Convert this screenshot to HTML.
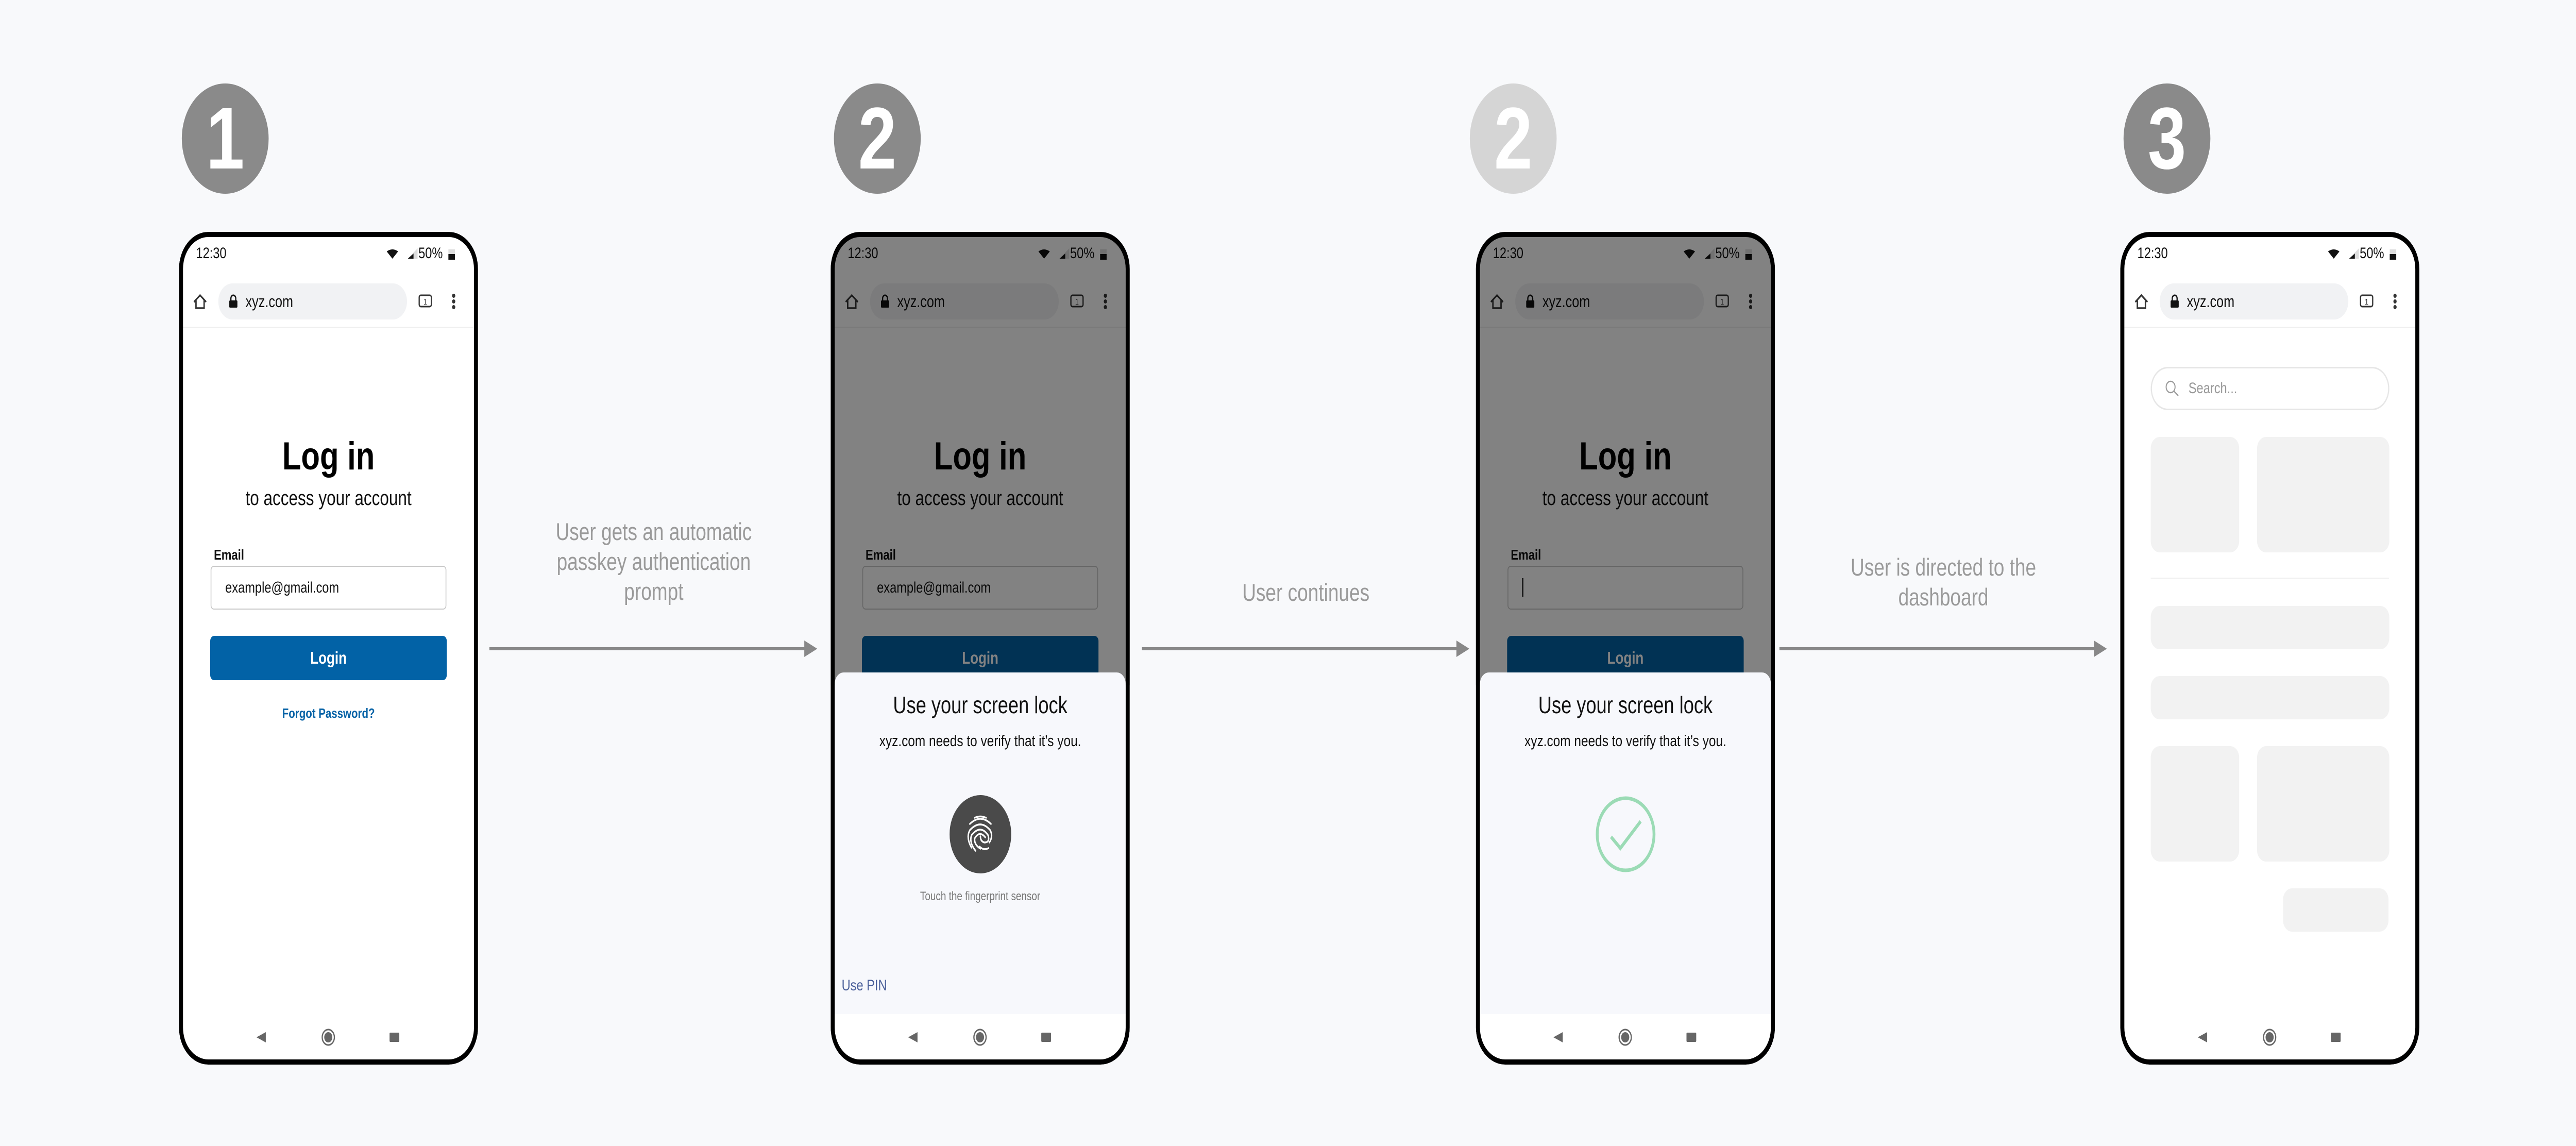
<!DOCTYPE html>
<html style="overflow:hidden"><head><meta charset="utf-8"><style>
*{margin:0;padding:0;box-sizing:border-box}
html{overflow:hidden;background:#f8f9fb}
body{width:6348px;height:2224px;background:#f8f9fb;position:relative;overflow:hidden;font-family:"Liberation Sans",sans-serif;transform-origin:0 0}
.a{position:absolute}
.badge{position:absolute;top:162px;width:214px;height:214px;border-radius:50%;background:#8a8a8a;color:#fff;font-weight:bold;font-size:170px;line-height:214px;text-align:center}
.phone{position:absolute;top:450px;width:737px;height:1616px;border-radius:72px;overflow:hidden;background:#fff}
.frame{position:absolute;inset:0;border:10px solid #000;border-radius:72px;z-index:20}
.c{position:absolute;left:0;width:737px;text-align:center}
.time{left:42px;top:24px;font-size:30px;line-height:36px;color:#111}
.pct{left:590px;top:24px;font-size:30px;line-height:36px;color:#111}
.url{left:97px;top:100px;width:465px;height:70px;border-radius:35px;background:#f1f2f4}
.urlt{left:164px;top:116px;font-size:32px;line-height:38px;color:#111}
.sep{left:10px;top:184px;width:717px;height:3px;background:#efefef}
.login{top:396px;font-size:76px;font-weight:bold;line-height:80px;color:#000}
.sub{top:494px;font-size:40px;line-height:46px;color:#111}
.elab{left:86px;top:611px;font-size:28px;font-weight:bold;line-height:32px;color:#111}
.inp{left:78px;top:648px;width:581px;height:85px;border:2px solid #c9c9c9;border-radius:8px;background:#fff}
.inpt{left:114px;top:673px;font-size:30px;line-height:36px;color:#111}
.btn{left:77px;top:784px;width:583px;height:86px;border-radius:10px;background:#0262a6;color:#fff;font-weight:bold;font-size:33px;line-height:86px;text-align:center}
.fp{top:917px;font-size:26px;font-weight:bold;color:#0562a6;line-height:34px}
.nav{top:1543px}
.dim{left:0;top:0;width:737px;height:880px;background:rgba(0,0,0,0.49);z-index:5}
.sheet{left:10px;top:855px;width:717px;height:663px;background:#f7f8fc;border-radius:22px 22px 0 0;z-index:6}
.cap{position:absolute;color:#9a9a9a;font-size:47px;line-height:58px;text-align:center;width:700px}
.card{position:absolute;background:#f2f2f2;border-radius:22px}
</style></head><body>

<div class="badge" style="left:448px">1</div>
<div class="badge" style="left:2055px">2</div>
<div class="badge" style="left:3622px;background:#d5d5d5">2</div>
<div class="badge" style="left:5233px">3</div>

<svg class="a" style="left:0;top:0" width="6348" height="2224">
<g stroke="#888" stroke-width="6" fill="#888">
<line x1="1206" y1="1259" x2="1985" y2="1259"/><polygon points="2014,1259 1982,1243 1982,1275" stroke="none"/>
<line x1="2814" y1="1259" x2="3592" y2="1259"/><polygon points="3621,1259 3589,1243 3589,1275" stroke="none"/>
<line x1="4385" y1="1259" x2="5163" y2="1259"/><polygon points="5192,1259 5160,1243 5160,1275" stroke="none"/>
</g></svg>
<div class="cap" style="left:1261px;top:1003px">User gets an automatic<br>passkey authentication<br>prompt</div>
<div class="cap" style="left:2868px;top:1121px">User continues</div>
<div class="cap" style="left:4439px;top:1072px">User is directed to the<br>dashboard</div>

<!-- PHONE 1 -->
<div class="phone" style="left:441px">
<div class="a time">12:30</div>
<svg class="a" style="left:508px;top:30px" width="180" height="30"><path d="M4 8 Q18 0 32 8 L18 22Z" fill="#111"/><path d="M56 22 L80 22 L80 2Z" fill="#ddd"/><path d="M56 22 L70 22 L70 12Z" fill="#111"/><rect x="156" y="4" width="16" height="20" fill="#ddd"/><rect x="156" y="13" width="16" height="11" fill="#111"/></svg>
<div class="a pct">50%</div>
<div class="a url"></div>
<svg class="a" style="left:34px;top:118px" width="40" height="36"><path d="M3 18 L18 5 L33 18 M8 15 V30 H28 V15" fill="none" stroke="#333" stroke-width="3.5"/></svg>
<svg class="a" style="left:122px;top:121px" width="24" height="28"><path d="M6 12 V8 a6 6 0 0 1 12 0 V12" fill="none" stroke="#111" stroke-width="3"/><rect x="2" y="12" width="20" height="14" rx="2" fill="#111"/></svg>
<div class="a urlt">xyz.com</div>
<svg class="a" style="left:590px;top:121px" width="36" height="28"><rect x="2" y="2" width="30" height="22" rx="4" fill="none" stroke="#333" stroke-width="3"/><text x="17" y="20" font-size="16" text-anchor="middle" font-family="Liberation Sans" fill="#333">1</text></svg>
<svg class="a" style="left:670px;top:118px" width="14" height="36"><circle cx="7" cy="6" r="4" fill="#333"/><circle cx="7" cy="17" r="4" fill="#333"/><circle cx="7" cy="28" r="4" fill="#333"/></svg>
<div class="a sep"></div>
<div class="c login">Log in</div>
<div class="c sub">to access your account</div>
<div class="a elab">Email</div>
<div class="a inp"></div>
<div class="a inpt">example@gmail.com</div>
<div class="a btn">Login</div>
<div class="c fp">Forgot Password?</div>
<svg class="a nav" style="left:0" width="737" height="40"><path d="M191 20 L214 10 V30Z" fill="#666"/><circle cx="368" cy="20" r="15" fill="none" stroke="#666" stroke-width="3"/><circle cx="368" cy="20" r="10" fill="#666"/><rect x="519" y="11" width="24" height="18" rx="2" fill="#666"/></svg>
<div class="frame"></div>
</div>

<!-- PHONE 2 -->
<div class="phone" style="left:2047px">
<div class="a time">12:30</div>
<svg class="a" style="left:508px;top:30px" width="180" height="30"><path d="M4 8 Q18 0 32 8 L18 22Z" fill="#111"/><path d="M56 22 L80 22 L80 2Z" fill="#ddd"/><path d="M56 22 L70 22 L70 12Z" fill="#111"/><rect x="156" y="4" width="16" height="20" fill="#ddd"/><rect x="156" y="13" width="16" height="11" fill="#111"/></svg>
<div class="a pct">50%</div>
<div class="a url"></div>
<svg class="a" style="left:34px;top:118px" width="40" height="36"><path d="M3 18 L18 5 L33 18 M8 15 V30 H28 V15" fill="none" stroke="#333" stroke-width="3.5"/></svg>
<svg class="a" style="left:122px;top:121px" width="24" height="28"><path d="M6 12 V8 a6 6 0 0 1 12 0 V12" fill="none" stroke="#111" stroke-width="3"/><rect x="2" y="12" width="20" height="14" rx="2" fill="#111"/></svg>
<div class="a urlt">xyz.com</div>
<svg class="a" style="left:590px;top:121px" width="36" height="28"><rect x="2" y="2" width="30" height="22" rx="4" fill="none" stroke="#333" stroke-width="3"/><text x="17" y="20" font-size="16" text-anchor="middle" font-family="Liberation Sans" fill="#333">1</text></svg>
<svg class="a" style="left:670px;top:118px" width="14" height="36"><circle cx="7" cy="6" r="4" fill="#333"/><circle cx="7" cy="17" r="4" fill="#333"/><circle cx="7" cy="28" r="4" fill="#333"/></svg>
<div class="a sep"></div>
<div class="c login">Log in</div>
<div class="c sub">to access your account</div>
<div class="a elab">Email</div>
<div class="a inp"></div>
<div class="a inpt">example@gmail.com</div>
<div class="a btn">Login</div>
<div class="a dim"></div>
<div class="a sheet"></div>
<div class="c" style="top:891px;font-size:46px;line-height:54px;color:#111;z-index:7">Use your screen lock</div>
<div class="c" style="top:969px;font-size:31px;line-height:38px;color:#111;z-index:7">xyz.com needs to verify that it’s you.</div>
<svg class="a" style="left:293px;top:1093px;z-index:7" width="152" height="152"><circle cx="76" cy="76" r="76" fill="#4a4a4a"/>
<g fill="none" stroke="#fff" stroke-width="3.5" stroke-linecap="round">
<path d="M62 44 Q76 39 90 44"/><path d="M50 56 Q76 36 102 56"/><path d="M54 102 Q40 82 50 68 Q76 46 100 68 Q108 80 98 92"/><path d="M64 108 Q48 92 54 78 Q76 56 95 78 Q100 92 86 92 Q76 90 76 80"/><path d="M76 104 Q60 96 62 84 Q74 68 88 82"/><path d="M96 103 Q84 108 74 100"/></g></svg>
<div class="c" style="top:1276px;font-size:24px;line-height:28px;color:#777;z-index:7">Touch the fingerprint sensor</div>
<div class="a" style="left:27px;top:1446px;font-size:30px;line-height:34px;color:#4a5f9a;z-index:7">Use PIN</div>
<svg class="a nav" style="left:0" width="737" height="40"><path d="M191 20 L214 10 V30Z" fill="#666"/><circle cx="368" cy="20" r="15" fill="none" stroke="#666" stroke-width="3"/><circle cx="368" cy="20" r="10" fill="#666"/><rect x="519" y="11" width="24" height="18" rx="2" fill="#666"/></svg>
<div class="frame"></div>
</div>

<!-- PHONE 3 -->
<div class="phone" style="left:3637px">
<div class="a time">12:30</div>
<svg class="a" style="left:508px;top:30px" width="180" height="30"><path d="M4 8 Q18 0 32 8 L18 22Z" fill="#111"/><path d="M56 22 L80 22 L80 2Z" fill="#ddd"/><path d="M56 22 L70 22 L70 12Z" fill="#111"/><rect x="156" y="4" width="16" height="20" fill="#ddd"/><rect x="156" y="13" width="16" height="11" fill="#111"/></svg>
<div class="a pct">50%</div>
<div class="a url"></div>
<svg class="a" style="left:34px;top:118px" width="40" height="36"><path d="M3 18 L18 5 L33 18 M8 15 V30 H28 V15" fill="none" stroke="#333" stroke-width="3.5"/></svg>
<svg class="a" style="left:122px;top:121px" width="24" height="28"><path d="M6 12 V8 a6 6 0 0 1 12 0 V12" fill="none" stroke="#111" stroke-width="3"/><rect x="2" y="12" width="20" height="14" rx="2" fill="#111"/></svg>
<div class="a urlt">xyz.com</div>
<svg class="a" style="left:590px;top:121px" width="36" height="28"><rect x="2" y="2" width="30" height="22" rx="4" fill="none" stroke="#333" stroke-width="3"/><text x="17" y="20" font-size="16" text-anchor="middle" font-family="Liberation Sans" fill="#333">1</text></svg>
<svg class="a" style="left:670px;top:118px" width="14" height="36"><circle cx="7" cy="6" r="4" fill="#333"/><circle cx="7" cy="17" r="4" fill="#333"/><circle cx="7" cy="28" r="4" fill="#333"/></svg>
<div class="a sep"></div>
<div class="c login">Log in</div>
<div class="c sub">to access your account</div>
<div class="a elab">Email</div>
<div class="a inp"></div>
<div class="a" style="left:114px;top:672px;width:3px;height:36px;background:#111"></div>
<div class="a btn">Login</div>
<div class="a dim"></div>
<div class="a sheet"></div>
<div class="c" style="top:891px;font-size:46px;line-height:54px;color:#111;z-index:7">Use your screen lock</div>
<div class="c" style="top:969px;font-size:31px;line-height:38px;color:#111;z-index:7">xyz.com needs to verify that it’s you.</div>
<svg class="a" style="left:289px;top:1089px;z-index:7" width="160" height="160"><circle cx="80" cy="80" r="70" fill="none" stroke="#9bdbb5" stroke-width="7"/><path d="M44 85 L67 107 L117 55" fill="none" stroke="#9bdbb5" stroke-width="7"/></svg>
<svg class="a nav" style="left:0" width="737" height="40"><path d="M191 20 L214 10 V30Z" fill="#666"/><circle cx="368" cy="20" r="15" fill="none" stroke="#666" stroke-width="3"/><circle cx="368" cy="20" r="10" fill="#666"/><rect x="519" y="11" width="24" height="18" rx="2" fill="#666"/></svg>
<div class="frame"></div>
</div>

<!-- PHONE 4 -->
<div class="phone" style="left:5225px">
<div class="a time">12:30</div>
<svg class="a" style="left:508px;top:30px" width="180" height="30"><path d="M4 8 Q18 0 32 8 L18 22Z" fill="#111"/><path d="M56 22 L80 22 L80 2Z" fill="#ddd"/><path d="M56 22 L70 22 L70 12Z" fill="#111"/><rect x="156" y="4" width="16" height="20" fill="#ddd"/><rect x="156" y="13" width="16" height="11" fill="#111"/></svg>
<div class="a pct">50%</div>
<div class="a url"></div>
<svg class="a" style="left:34px;top:118px" width="40" height="36"><path d="M3 18 L18 5 L33 18 M8 15 V30 H28 V15" fill="none" stroke="#333" stroke-width="3.5"/></svg>
<svg class="a" style="left:122px;top:121px" width="24" height="28"><path d="M6 12 V8 a6 6 0 0 1 12 0 V12" fill="none" stroke="#111" stroke-width="3"/><rect x="2" y="12" width="20" height="14" rx="2" fill="#111"/></svg>
<div class="a urlt">xyz.com</div>
<svg class="a" style="left:590px;top:121px" width="36" height="28"><rect x="2" y="2" width="30" height="22" rx="4" fill="none" stroke="#333" stroke-width="3"/><text x="17" y="20" font-size="16" text-anchor="middle" font-family="Liberation Sans" fill="#333">1</text></svg>
<svg class="a" style="left:670px;top:118px" width="14" height="36"><circle cx="7" cy="6" r="4" fill="#333"/><circle cx="7" cy="17" r="4" fill="#333"/><circle cx="7" cy="28" r="4" fill="#333"/></svg>
<div class="a sep"></div>
<div class="a" style="left:75px;top:262px;width:588px;height:84px;border:3px solid #e6e6e6;border-radius:42px"></div>
<svg class="a" style="left:110px;top:287px" width="36" height="36"><circle cx="14" cy="14" r="11" fill="none" stroke="#999" stroke-width="2.5"/><line x1="22" y1="22" x2="33" y2="31" stroke="#999" stroke-width="2.5"/></svg>
<div class="a" style="left:168px;top:286px;font-size:30px;line-height:36px;color:#999">Search...</div>
<div class="card" style="left:75px;top:398px;width:218px;height:224px"></div>
<div class="card" style="left:337px;top:398px;width:326px;height:224px"></div>
<div class="a" style="left:75px;top:671px;width:587px;height:2px;background:#efefef"></div>
<div class="card" style="left:75px;top:726px;width:588px;height:84px"></div>
<div class="card" style="left:75px;top:862px;width:588px;height:84px"></div>
<div class="card" style="left:75px;top:998px;width:218px;height:224px"></div>
<div class="card" style="left:337px;top:998px;width:326px;height:224px"></div>
<div class="card" style="left:401px;top:1274px;width:260px;height:84px"></div>
<svg class="a nav" style="left:0" width="737" height="40"><path d="M191 20 L214 10 V30Z" fill="#666"/><circle cx="368" cy="20" r="15" fill="none" stroke="#666" stroke-width="3"/><circle cx="368" cy="20" r="10" fill="#666"/><rect x="519" y="11" width="24" height="18" rx="2" fill="#666"/></svg>
<div class="frame"></div>
</div>

<script>
(function(){var w=document.documentElement.clientWidth||innerWidth,h=document.documentElement.clientHeight||innerHeight;var sx=Math.min(1,w/6348),sy=Math.min(1,h/2224);if(sx<1||sy<1){document.body.style.transform="scale("+sx+","+sy+")";}})();
</script>
</body></html>
